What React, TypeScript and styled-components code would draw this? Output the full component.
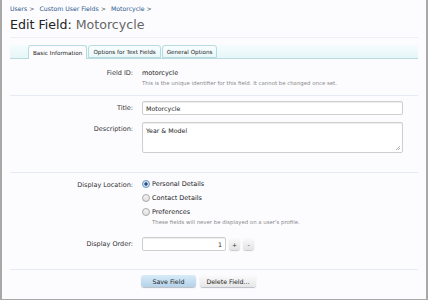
import styled, { createGlobalStyle } from "styled-components";

const Global = createGlobalStyle`
    html, body {
        margin: 0;
        padding: 0;
        background: #fcfcff;
        font-family: "DejaVu Sans", Verdana, sans-serif;
    }
`;

const Page = styled.div`
    width: 428px;
    height: 300px;
    box-sizing: border-box;
    border: 1px solid #a8a8a8;
    border-top: none;
    border-left-width: 2px;
    border-right-width: 2px;
    background: #fcfcff;
    overflow: hidden;
    padding: 0 8px 0 8px;
`;

const Crumbs = styled.div`
    display: flex;
    gap: 5px;
    padding-top: 5px;
    font-size: 6.2px;
    color: #2f5b8a;
`;

const Crumb = styled.span`
    &::after {
        content: " >";
        color: #555;
    }
`;

const Heading = styled.h1`
    margin: 5px 0 0 0;
    padding-bottom: 5px;
    font-size: 12.6px;
    font-weight: normal;
    color: #222;
    border-bottom: 1px solid #eef0f6;
    span {
        color: #666;
    }
`;

const TabBar = styled.div`
    display: flex;
    margin-top: 7px;
    height: 13px;
    padding-left: 18px;
    background: linear-gradient(#f5fcfd, #e6f6f8);
    border-bottom: 1px solid #b9dbe0;
    align-items: flex-end;
`;

const Tab = styled.div<{ $active?: boolean }>`
    height: ${(p) => (p.$active ? "14px" : "13px")};
    margin-bottom: ${(p) => (p.$active ? "-1px" : "0")};
    box-sizing: border-box;
    padding: 0 4px;
    display: flex;
    align-items: center;
    font-size: 5.65px;
    color: #222;
    border: 1px solid #b9dbe0;
    border-bottom: ${(p) => (p.$active ? "none" : "1px solid #b9dbe0")};
    border-radius: 3px 3px 0 0;
    background: ${(p) => (p.$active ? "#fcfcff" : "linear-gradient(#f9feff, #e9f7f9)")};
    margin-right: 1px;
`;

const Section = styled.div<{ $pad: string; $gap?: number }>`
    display: grid;
    grid-template-columns: 123px 1fr;
    column-gap: 9px;
    row-gap: ${(p) => p.$gap ?? 7}px;
    padding: ${(p) => p.$pad};
    border-bottom: 1px solid #e6eaf2;
    align-items: start;
`;

const Label = styled.div<{ $top?: number }>`
    text-align: right;
    font-size: 6.5px;
    color: #333;
    padding-top: ${(p) => p.$top ?? 0}px;
`;

const Value = styled.div`
    font-size: 6.5px;
    color: #222;
`;

const Hint = styled.div<{ $indent?: number }>`
    font-size: 5.4px;
    color: #8a8a8a;
    margin-top: 3px;
    padding-left: ${(p) => p.$indent ?? 0}px;
`;

const TextInput = styled.div<{ $h: number; $w?: number; $right?: boolean }>`
    box-sizing: border-box;
    width: ${(p) => (p.$w ? `${p.$w}px` : "261px")};
    height: ${(p) => p.$h}px;
    background: #fff;
    border: 1px solid #cfcfcf;
    border-radius: 2px;
    box-shadow: inset 0 1px 1px #ececec;
    font-size: 6.3px;
    color: #222;
    padding: ${(p) => (p.$h > 20 ? "4px 3px" : "0 3px")};
    display: flex;
    align-items: ${(p) => (p.$h > 20 ? "flex-start" : "center")};
    justify-content: ${(p) => (p.$right ? "flex-end" : "flex-start")};
    position: relative;
`;

const Grip = styled.svg`
    position: absolute;
    right: 2px;
    bottom: 2px;
`;

const Options = styled.div`
    display: flex;
    flex-direction: column;
    gap: 6px;
`;

const Option = styled.div`
    display: flex;
    align-items: center;
    gap: 2px;
    font-size: 6.5px;
    color: #222;
`;

const Radio = styled.span<{ $on?: boolean }>`
    width: 8px;
    height: 8px;
    box-sizing: border-box;
    border-radius: 50%;
    border: 1px solid #9aa0a8;
    background: ${(p) => (p.$on ? "radial-gradient(circle, #2f4f7f 0 1.4px, #cfe3f7 1.9px)" : "linear-gradient(#f4f4f4, #e0e0e0)")};
    border-color: ${(p) => (p.$on ? "#6d92c0" : "#a8a8a8")};
`;

const Spin = styled.div`
    display: flex;
    align-items: center;
    gap: 3px;
`;

const SpinButton = styled.div`
    width: 11px;
    height: 12px;
    border-radius: 3px;
    background: linear-gradient(#fafafa, #e3e3e3);
    box-shadow: 0 1px 1px #c8c8c8;
    font-size: 6px;
    color: #333;
    display: flex;
    align-items: center;
    justify-content: center;
`;

const Buttons = styled.div`
    display: flex;
    gap: 4px;
    padding: 5px 0 0 131px;
`;

const Button = styled.div<{ $primary?: boolean }>`
    height: 12px;
    width: ${(p) => (p.$primary ? "55px" : "56px")};
    border-radius: 3px;
    display: flex;
    align-items: center;
    justify-content: center;
    font-size: 6.3px;
    color: #222;
    background: ${(p) => (p.$primary ? "linear-gradient(#d9ebf8, #b3d2ea)" : "linear-gradient(#fbfbfb, #e6e6e6)")};
    box-shadow: 0 1px 1px #b8bcc4;
`;

export default function App() {
    return (
        <Page>
            <Global />
            <Crumbs>
                <Crumb>Users</Crumb>
                <Crumb>Custom User Fields</Crumb>
                <Crumb>Motorcycle</Crumb>
            </Crumbs>
            <Heading>
                Edit Field: <span>Motorcycle</span>
            </Heading>
            <TabBar>
                <Tab $active>Basic Information</Tab>
                <Tab>Options for Text Fields</Tab>
                <Tab>General Options</Tab>
            </TabBar>

            <Section $pad="10px 0 9px 0">
                <Label>Field ID:</Label>
                <div>
                    <Value>motorcycle</Value>
                    <Hint>This is the unique identifier for this field. It cannot be changed once set.</Hint>
                </div>
            </Section>

            <Section $pad="5px 0 19px 0">
                <Label $top={3}>Title:</Label>
                <TextInput $h={14}>Motorcycle</TextInput>
                <Label $top={3}>Description:</Label>
                <TextInput $h={31}>
                    Year &amp; Model
                    <Grip width="5" height="5" viewBox="0 0 5 5">
                        <path d="M1 5 L5 1 M3 5 L5 3" stroke="#999" strokeWidth="0.7" />
                    </Grip>
                </TextInput>
            </Section>

            <Section $pad="7px 0 18px 0" $gap={12}>
                <Label $top={1}>Display Location:</Label>
                <div>
                    <Options>
                        <Option><Radio $on />Personal Details</Option>
                        <Option><Radio />Contact Details</Option>
                        <Option><Radio />Preferences</Option>
                    </Options>
                    <Hint $indent={10}>These fields will never be displayed on a user's profile.</Hint>
                </div>
                <Label $top={3}>Display Order:</Label>
                <Spin>
                    <TextInput $h={14} $w={84} $right>1</TextInput>
                    <SpinButton>+</SpinButton>
                    <SpinButton>-</SpinButton>
                </Spin>
            </Section>

            <Buttons>
                <Button $primary>Save Field</Button>
                <Button>Delete Field...</Button>
            </Buttons>
        </Page>
    );
}
